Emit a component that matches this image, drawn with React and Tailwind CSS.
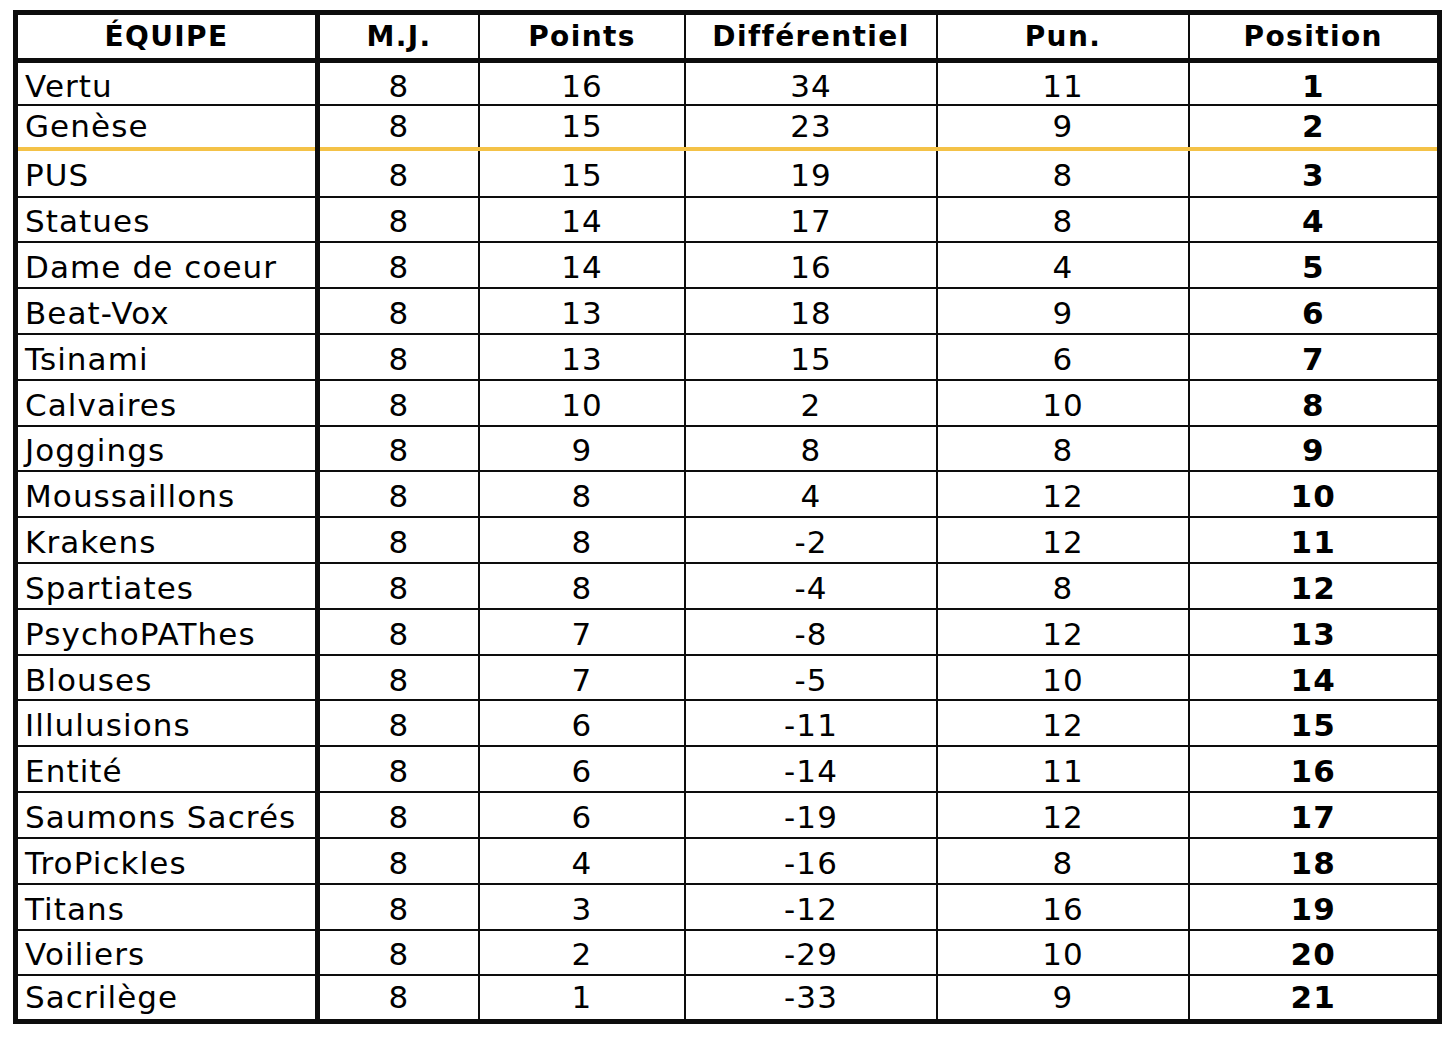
const rows = [
  ["Vertu", 8, 16, 34, 11, 1],
  ["Genèse", 8, 15, 23, 9, 2],
  ["PUS", 8, 15, 19, 8, 3],
  ["Statues", 8, 14, 17, 8, 4],
  ["Dame de coeur", 8, 14, 16, 4, 5],
  ["Beat-Vox", 8, 13, 18, 9, 6],
  ["Tsinami", 8, 13, 15, 6, 7],
  ["Calvaires", 8, 10, 2, 10, 8],
  ["Joggings", 8, 9, 8, 8, 9],
  ["Moussaillons", 8, 8, 4, 12, 10],
  ["Krakens", 8, 8, -2, 12, 11],
  ["Spartiates", 8, 8, -4, 8, 12],
  ["PsychoPAThes", 8, 7, -8, 12, 13],
  ["Blouses", 8, 7, -5, 10, 14],
  ["Illulusions", 8, 6, -11, 12, 15],
  ["Entité", 8, 6, -14, 11, 16],
  ["Saumons Sacrés", 8, 6, -19, 12, 17],
  ["TroPickles", 8, 4, -16, 8, 18],
  ["Titans", 8, 3, -12, 16, 19],
  ["Voiliers", 8, 2, -29, 10, 20],
  ["Sacrilège", 8, 1, -33, 9, 21],
];

const last = rows.length - 1;

const rowHeight = (i) => {
  if (i === 0) return "h-[44.5px]";
  if (i === 1) return "h-[43.5px]";
  if (i === 2) return "h-[48px]";
  if (i === last) return "h-[46px]";
  return "h-[45.82px]";
};

// the 2nd and last rows sit their text higher in the cell
const rowPad = (i) => (i === 1 || i === last ? "pt-0" : "pt-[5px]");

export default function App() {
  return (
    <div className="min-h-screen bg-white pt-[10px] pl-[13px] font-['DejaVu_Sans',sans-serif] text-black">
      <table className="table-fixed border-collapse border-[5px] border-[#0d0d0d] w-[1428px]">
        <colgroup>
          <col className="w-[302px]" />
          <col className="w-[161.5px]" />
          <col className="w-[206px]" />
          <col className="w-[252px]" />
          <col className="w-[252px]" />
          <col className="w-[250px]" />
        </colgroup>
        <thead>
          <tr className="h-[46px]">
            {["ÉQUIPE", "M.J.", "Points", "Différentiel", "Pun.", "Position"].map((h, i) => (
              <th key={h}
                className={`border-b-[5px] border-[#0d0d0d] p-0 pt-[1px] text-[28px] font-bold tracking-[0.05em] text-center align-middle ${i === 0 ? "border-r-[5px]" : "border-r-2"}`}>
                {h}
              </th>
            ))}
          </tr>
        </thead>
        <tbody>
          {rows.map((r, i) => {
            // line under the top two: yellow separator
            const bottom = i === 1 ? "border-b-[4px] border-b-[#f4c247]" : "border-b-2 border-b-[#0d0d0d]";
            return (
              <tr key={r[0]} className={rowHeight(i)}>
                {r.map((v, j) => (
                  <td key={j}
                    className={`${bottom} ${rowPad(i)} border-r-[#0d0d0d] p-0 align-middle text-[31px] leading-none tracking-[0.035em] ${j === 0 ? "border-r-[5px] text-left pl-[7px] whitespace-nowrap" : "border-r-2 text-center"} ${j === 5 ? "font-bold" : ""}`}>
                    {v}
                  </td>
                ))}
              </tr>
            );
          })}
        </tbody>
      </table>
    </div>
  );
}
